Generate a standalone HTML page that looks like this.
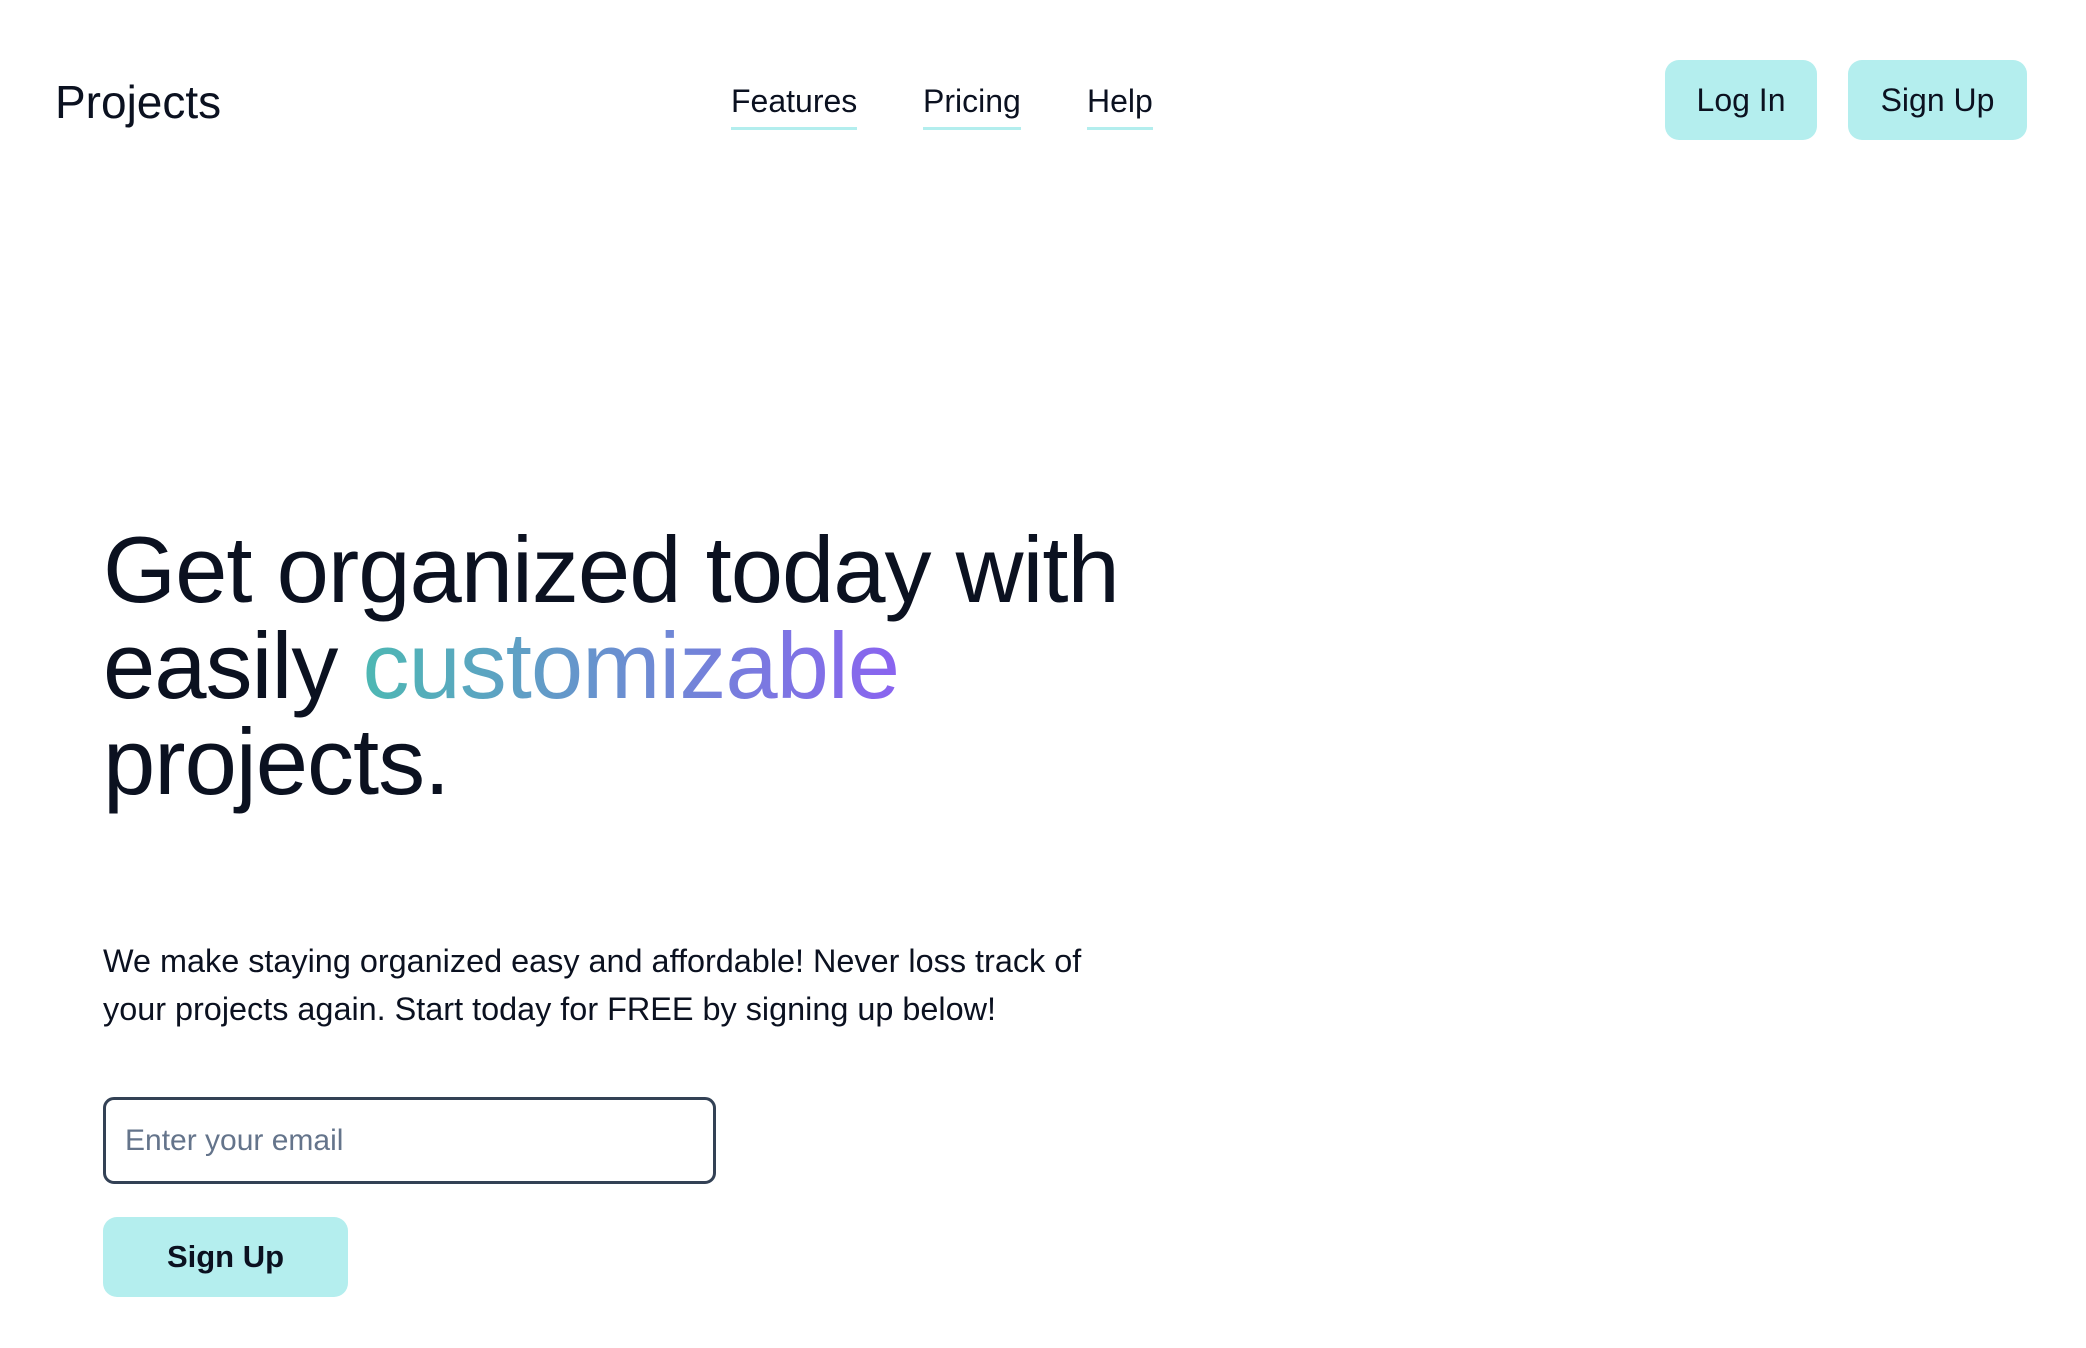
<!DOCTYPE html>
<html><head><meta charset="utf-8"><style>
*{margin:0;padding:0;box-sizing:border-box}
html,body{width:2086px;height:1348px;background:#fff;overflow:hidden;font-family:"Liberation Sans",sans-serif;color:#0b1120}
.logo{position:absolute;left:55px;top:74px;font-size:46px;line-height:56px}
.nav a{position:absolute;top:81px;font-size:32px;line-height:40px;color:#0b1120;text-decoration:none;border-bottom:3px solid #b3eeee;padding-bottom:6px}
.btn{position:absolute;background:#b4eeee;border-radius:14px;font-size:32px;display:flex;align-items:center;justify-content:center;color:#0b1120}
h1{position:absolute;left:103px;top:522px;font-size:94px;line-height:96px;font-weight:normal;letter-spacing:-1px;white-space:nowrap}
.grad{background:linear-gradient(90deg,#4db8b3,#8a63f0);-webkit-background-clip:text;background-clip:text;color:transparent}
p{position:absolute;left:103px;top:937px;font-size:32.4px;line-height:48px;white-space:nowrap}
.input{position:absolute;left:103px;top:1097px;width:613px;height:87px;border:3px solid #334155;border-radius:11px;font-size:30px;color:#64748b;padding-left:19px;display:flex;align-items:center}
</style></head><body>
<div class="logo">Projects</div>
<div class="nav"><a style="left:731px">Features</a><a style="left:923px">Pricing</a><a style="left:1087px">Help</a></div>
<div class="btn" style="left:1665px;top:60px;width:152px;height:80px">Log In</div>
<div class="btn" style="left:1848px;top:60px;width:179px;height:80px">Sign Up</div>
<h1>Get organized today with<br>easily <span class="grad">customizable</span><br>projects.</h1>
<p>We make staying organized easy and affordable! Never loss track of<br>your projects again. Start today for FREE by signing up below!</p>
<div class="input">Enter your email</div>
<div class="btn" style="left:103px;top:1217px;width:245px;height:80px;font-weight:bold;font-size:31px">Sign Up</div>
</body></html>
